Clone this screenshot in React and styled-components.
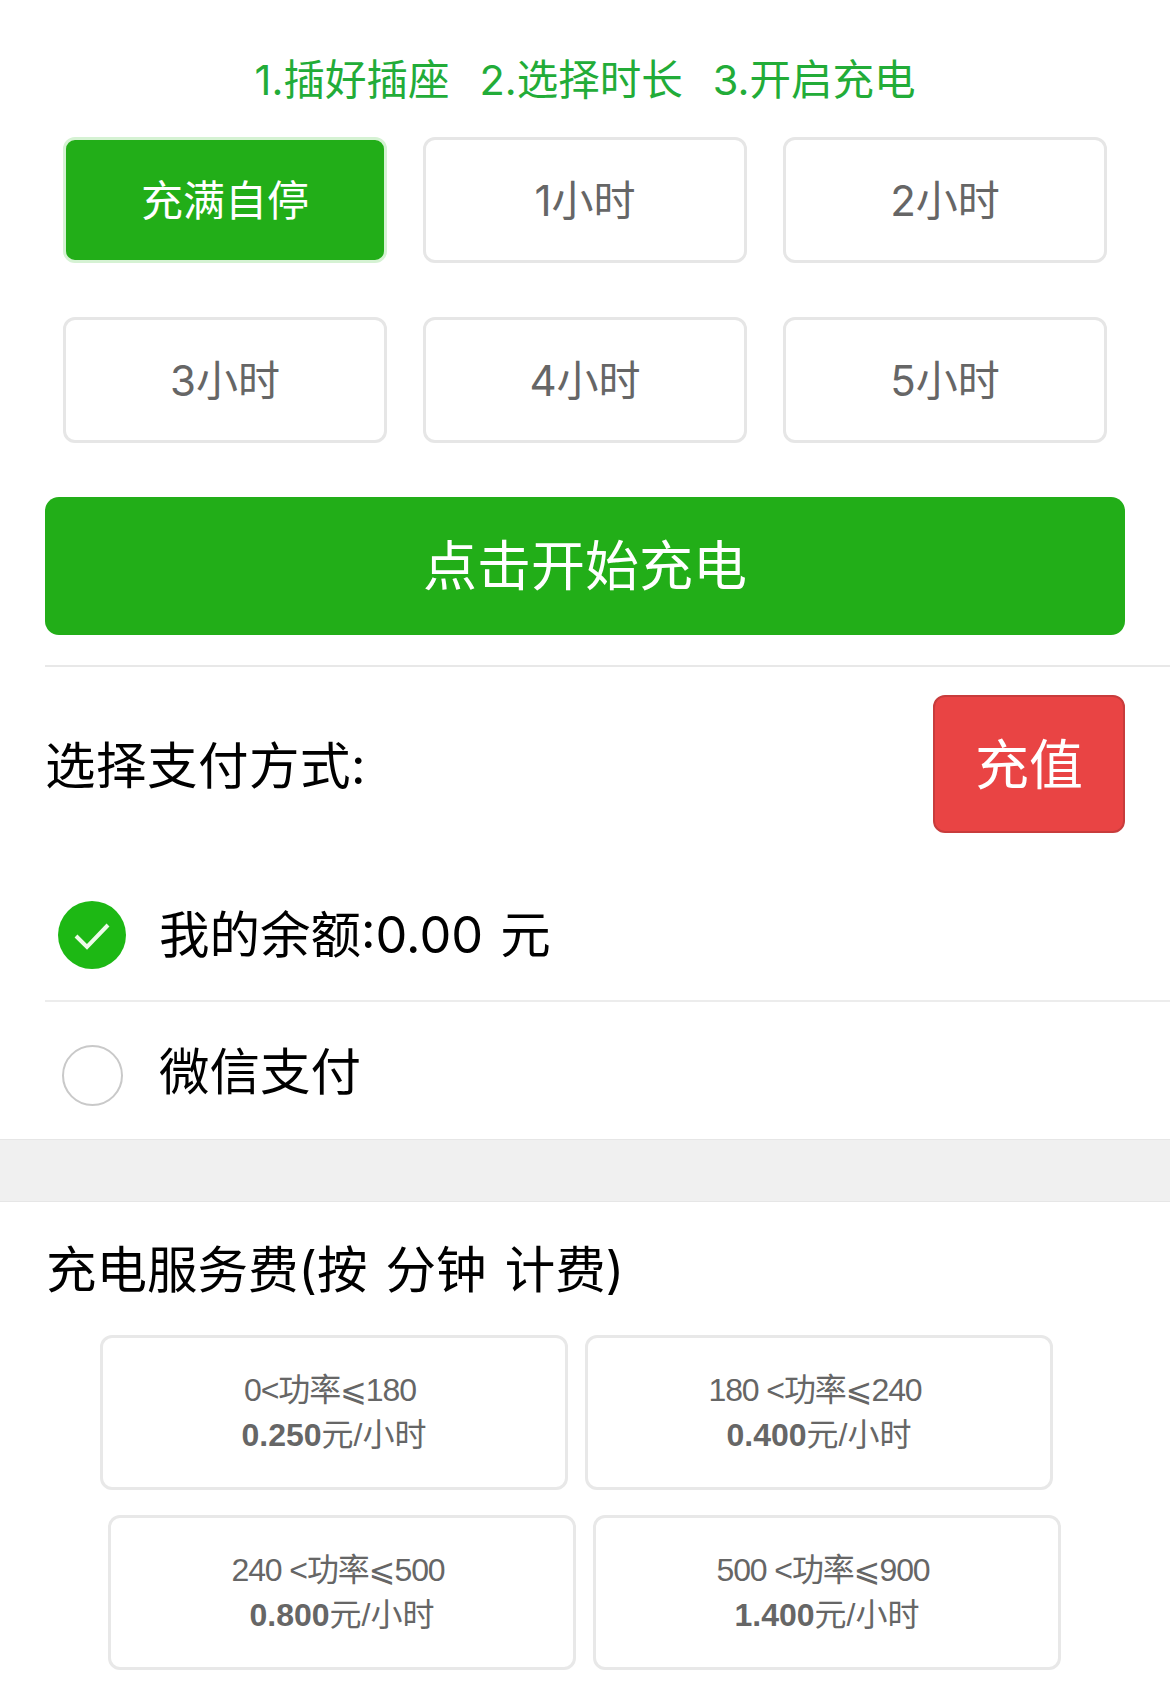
import React from "react";
import styled, { createGlobalStyle } from "styled-components";

const GlobalStyle = createGlobalStyle`
  html, body {
    margin: 0;
    padding: 0;
    background: #fff;
    font-family: Inter, "Noto Sans CJK SC", "DejaVu Sans", sans-serif;
  }
  * {
    box-sizing: border-box;
  }
`;

const Page = styled.div`
  width: 1170px;
  height: 1708px;
  background: #fff;
  overflow: hidden;
`;

const Steps = styled.div`
  display: flex;
  justify-content: center;
  gap: 30px;
  padding-top: 56px;
  height: 137px;
  font-size: 41.5px;
  line-height: 48px;
  color: #22ac38;
`;

const DurationGrid = styled.div`
  display: grid;
  grid-template-columns: repeat(3, 324px);
  grid-auto-rows: 126px;
  column-gap: 36px;
  row-gap: 54px;
  padding-left: 63px;
`;

const Duration = styled.div`
  display: flex;
  align-items: center;
  justify-content: center;
  padding-bottom: 6px;
  font-size: 42px;
  border-radius: 12px;
  border: 3px solid ${(p) => (p.$active ? "#d5f2d3" : "#e6e6e6")};
  color: ${(p) => (p.$active ? "#fff" : "#666")};
  background: ${(p) => (p.$active ? "#22ae18" : "#fff")};
`;

const StartButton = styled.div`
  display: flex;
  align-items: center;
  justify-content: center;
  width: 1080px;
  height: 138px;
  margin: 54px 0 30px 45px;
  padding-bottom: 8px;
  border-radius: 14px;
  background: #22ae18;
  color: #fff;
  font-size: 54px;
`;

const Section = styled.div`
  margin-left: 45px;
  border-top: 2px solid #e8e8e8;
`;

const PayHeader = styled.div`
  display: flex;
  align-items: center;
  justify-content: space-between;
  height: 168px;
  padding: 26px 45px 0 0;
`;

const Heading = styled.div`
  padding-top: 4px;
  font-size: 50.5px;
  line-height: 60px;
  letter-spacing: 0.5px;
  color: #000;
`;

const TopUp = styled.div`
  display: flex;
  align-items: center;
  justify-content: center;
  width: 192px;
  height: 138px;
  padding-bottom: 6px;
  border-radius: 12px;
  border: 2px solid #c83c3c;
  background: #e94444;
  color: #fff;
  font-size: 54px;
`;

const PayOption = styled.div`
  display: flex;
  align-items: center;
  height: ${(p) => p.$height}px;
  padding-top: ${(p) => p.$top}px;
  border-bottom: ${(p) => (p.$last ? "none" : "2px solid #ececec")};
`;

const RadioSlot = styled.div`
  display: flex;
  justify-content: center;
  width: 94px;
  margin-right: 20px;
`;

const Unchecked = styled.div`
  width: 61px;
  height: 61px;
  margin-top: 6px;
  border-radius: 50%;
  border: 2px solid #c9c9c9;
`;

const OptionLabel = styled.div`
  font-size: 50.5px;
  line-height: 60px;
  word-spacing: 3px;
  color: #000;
`;

const Band = styled.div`
  height: 63px;
  background: #f0f0f0;
  border-top: 1px solid #e6e6e6;
  border-bottom: 1px solid #e6e6e6;
`;

const RatesTitle = styled.div`
  padding: 38px 0 35px 46px;
  font-size: 50.5px;
  line-height: 60px;
  word-spacing: 4px;
  color: #000;
`;

const RateRow = styled.div`
  display: flex;
  gap: 17px;
  margin: 0 0 25px ${(p) => p.$indent}px;
`;

const RateCard = styled.div`
  display: flex;
  flex-direction: column;
  align-items: center;
  justify-content: center;
  width: 468px;
  height: 155px;
  border: 3px solid #e8e8e8;
  border-radius: 12px;
  color: #666;
  font-family: "Liberation Sans", "Noto Sans CJK SC", "DejaVu Sans", sans-serif;
  font-size: 32px;
  line-height: 45px;
`;

const Range = styled.div`
  padding-right: 8px;
  letter-spacing: -1.1px;
`;

const Price = styled.div`
  b {
    font-weight: 700;
  }
`;

const CheckedIcon = () => (
  <svg width="68" height="68" viewBox="0 0 68 68">
    <circle cx="34" cy="34" r="34" fill="#1db814" />
    <path d="M18 35l11 11 21-22" fill="none" stroke="#eefbea" strokeWidth="4" />
  </svg>
);

const durations = ["充满自停", "1小时", "2小时", "3小时", "4小时", "5小时"];

const rates = [
  {
    indent: 100,
    cards: [
      { range: "0<功率⩽180", price: "0.250" },
      { range: "180 <功率⩽240", price: "0.400" },
    ],
  },
  {
    indent: 108,
    cards: [
      { range: "240 <功率⩽500", price: "0.800" },
      { range: "500 <功率⩽900", price: "1.400" },
    ],
  },
];

const App = () => {
  return (
    <Page>
      <GlobalStyle />
      <Steps>
        <span>1.插好插座</span>
        <span>2.选择时长</span>
        <span>3.开启充电</span>
      </Steps>
      <DurationGrid>
        {durations.map((d, i) => (
          <Duration key={d} $active={i === 0}>
            {d}
          </Duration>
        ))}
      </DurationGrid>
      <StartButton>点击开始充电</StartButton>
      <Section>
        <PayHeader>
          <Heading>选择支付方式:</Heading>
          <TopUp>充值</TopUp>
        </PayHeader>
        <PayOption $height={167} $top={34}>
          <RadioSlot>
            <CheckedIcon />
          </RadioSlot>
          <OptionLabel>我的余额:0.00 元</OptionLabel>
        </PayOption>
        <PayOption $height={137} $last $top={3}>
          <RadioSlot>
            <Unchecked />
          </RadioSlot>
          <OptionLabel>微信支付</OptionLabel>
        </PayOption>
      </Section>
      <Band />
      <RatesTitle>充电服务费(按 分钟 计费)</RatesTitle>
      {rates.map((row) => (
        <RateRow key={row.indent} $indent={row.indent}>
          {row.cards.map((c) => (
            <RateCard key={c.range}>
              <Range>{c.range}</Range>
              <Price>
                <b>{c.price}</b>元/小时
              </Price>
            </RateCard>
          ))}
        </RateRow>
      ))}
    </Page>
  );
};

export default App;
